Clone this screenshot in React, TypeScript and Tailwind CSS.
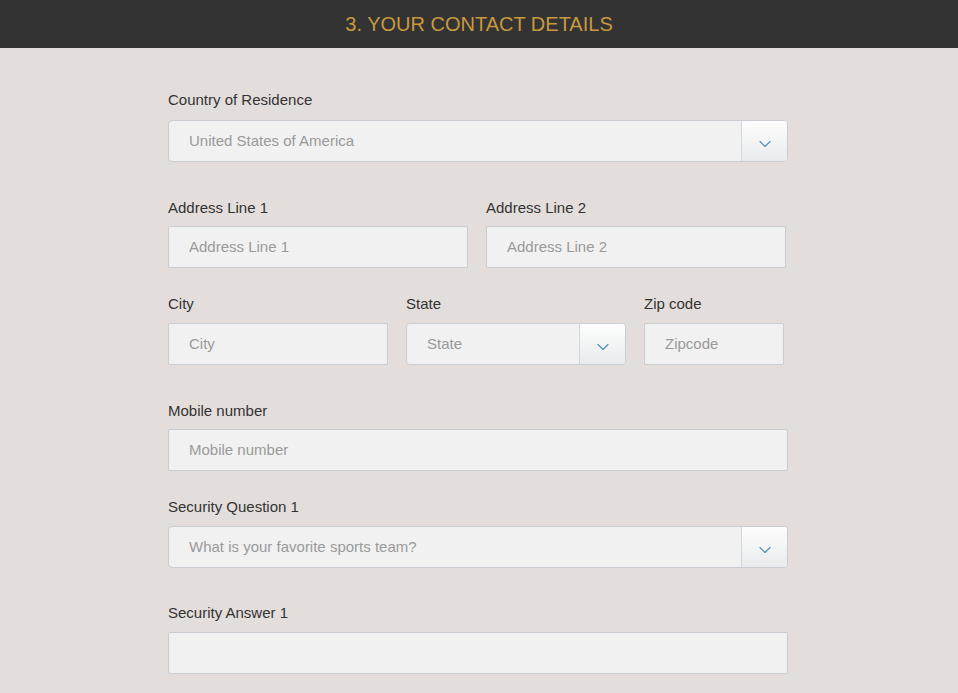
import { ChevronDown } from "lucide-react";

function Label({ children }: { children: React.ReactNode }) {
  return <div className="text-[15px] leading-[22px] text-[#333]">{children}</div>;
}

function TextBox({ placeholder, className = "" }: { placeholder?: string; className?: string }) {
  return (
    <div
      className={`h-[42px] flex items-center px-5 bg-[#f1f1f1] border border-[#c9ccd3] rounded-[2px] text-[15px] text-[#9a9a9a] ${className}`}
    >
      {placeholder}
    </div>
  );
}

function SelectBox({ value, className = "" }: { value: string; className?: string }) {
  return (
    <div
      className={`h-[42px] flex bg-[#f1f1f1] border border-[#c9ccd3] rounded-[4px] overflow-hidden text-[15px] text-[#9a9a9a] ${className}`}
    >
      <div className="flex-1 flex items-center px-5">{value}</div>
      <div className="w-[46px] flex items-center justify-center border-l border-[#d3d6db] bg-gradient-to-b from-[#fdfdfd] to-[#e9ebec]">
        <ChevronDown className="w-5 h-5 mt-[6px] text-[#4b8db5]" strokeWidth={1.3} />
      </div>
    </div>
  );
}

export default function App() {
  return (
    <div className="min-h-[693px] bg-[#e3dedc] font-['Liberation_Sans',Arial,sans-serif]">
      <div className="h-[48px] bg-[#333333] flex items-center justify-center">
        <h2 className="text-[20px] text-[#c8993e]">3. YOUR CONTACT DETAILS</h2>
      </div>

      <div className="w-[620px] ml-[168px] pt-[41px]">
        <Label>Country of Residence</Label>
        <SelectBox value="United States of America" className="mt-[9px]" />

        <div className="flex gap-[18px] mt-[35px]">
          <div className="w-[300px]">
            <Label>Address Line 1</Label>
            <TextBox placeholder="Address Line 1" className="mt-[7px]" />
          </div>
          <div className="w-[300px]">
            <Label>Address Line 2</Label>
            <TextBox placeholder="Address Line 2" className="mt-[7px]" />
          </div>
        </div>

        <div className="flex gap-[18px] mt-[25px]">
          <div className="w-[220px]">
            <Label>City</Label>
            <TextBox placeholder="City" className="mt-[8px]" />
          </div>
          <div className="w-[220px]">
            <Label>State</Label>
            <SelectBox value="State" className="mt-[8px]" />
          </div>
          <div className="w-[140px]">
            <Label>Zip code</Label>
            <TextBox placeholder="Zipcode" className="mt-[8px]" />
          </div>
        </div>

        <div className="mt-[35px]">
          <Label>Mobile number</Label>
          <TextBox placeholder="Mobile number" className="mt-[7px]" />
        </div>

        <div className="mt-[25px]">
          <Label>Security Question 1</Label>
          <SelectBox value="What is your favorite sports team?" className="mt-[8px]" />
        </div>

        <div className="mt-[34px]">
          <Label>Security Answer 1</Label>
          <TextBox className="mt-[8px]" />
        </div>
      </div>
    </div>
  );
}
